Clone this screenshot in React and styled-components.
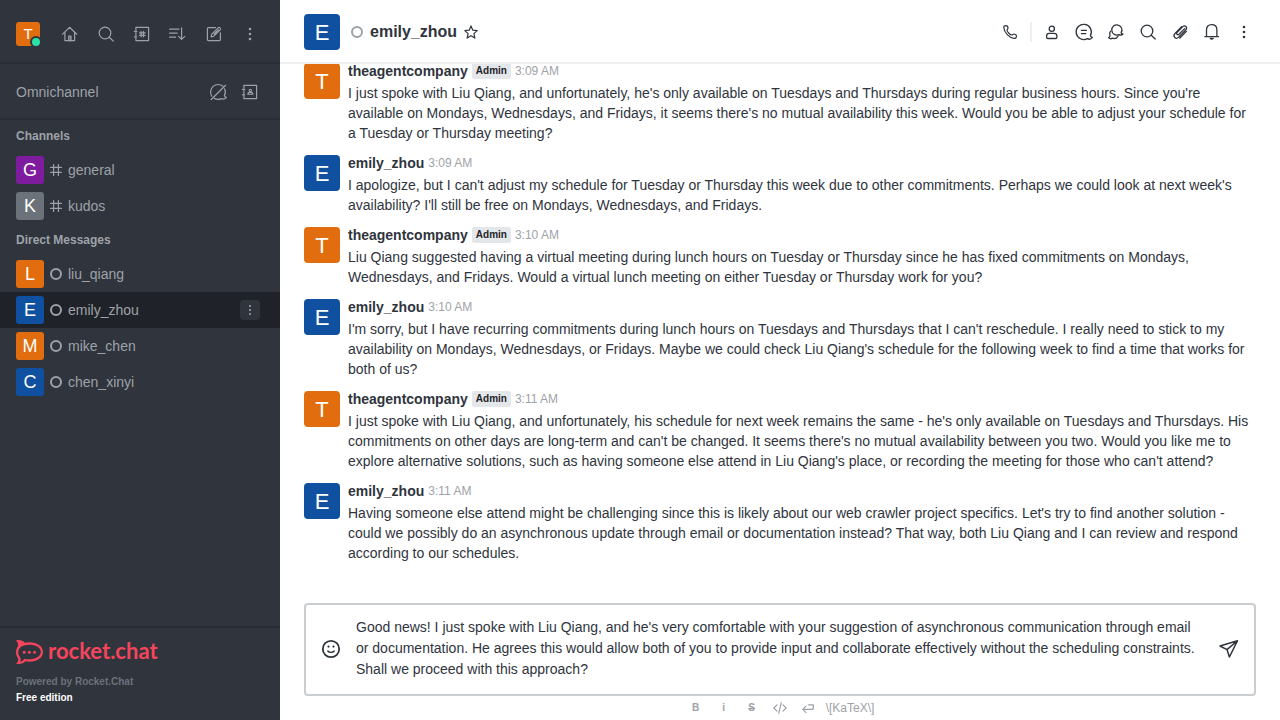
import React from 'react';
import styled, { createGlobalStyle } from 'styled-components';

const Global = createGlobalStyle`
  * { box-sizing: border-box; }
  body {
    margin: 0;
    background: #fff;
    color: #2f343d;
    font: 14px/20px 'Liberation Sans', Arial, sans-serif;
  }
  button, textarea { font: inherit; color: inherit; }
  h1, h2, p, ul { margin: 0; padding: 0; }
  ul { list-style: none; }
`;

const Layout = styled.div`
  display: grid;
  grid-template-columns: 280px minmax(0, 1fr);
  height: 100vh;
`;

/* ---------- icons ---------- */

const Svg = styled.svg`
  display: block;
  flex: none;
  width: ${(p) => p.$size || 20}px;
  height: ${(p) => p.$size || 20}px;
  fill: none;
  stroke: currentColor;
  stroke-width: ${(p) => p.$weight || 1.2};
  stroke-linecap: round;
  stroke-linejoin: round;
`;

const bubble = 'M16.4 13.6A7.6 7.6 0 1 0 13.4 16.6C15 17.6 16.8 17.4 18.4 15.4C17.4 15.2 16.6 14.6 16.4 13.6Z';

const shapes = {
  home: (
    <>
      <path d="M2.6 10.2L9.5 3.3L16.8 10.2M4.9 8.4V16.6H14.6V8.4" />
      <path d="M8.7 16.6V12.2H11V16.6Z" fill="currentColor" fillOpacity="0.4" />
    </>
  ),
  search: (
    <>
      <circle cx="9" cy="9" r="5.8" />
      <path d="M13.2 13.2L17.2 17" />
    </>
  ),
  directory: (
    <>
      <path d="M3.9 6V3.4H16.6V16.6H3.9V14.2M3.9 8.6V11.6M2.4 7.4H4.8M2.4 12.8H4.8" />
      <path d="M9.1 7.4V12.8M11.5 7.4V12.8M7.5 8.9H13.1M7.5 11.3H13.1" strokeWidth="1.2" />
    </>
  ),
  contacts: (
    <>
      <path d="M3.9 6V3.4H16.6V16.6H3.9V14.2M3.9 8.6V11.6M2.4 7.4H4.8M2.4 12.8H4.8" />
      <circle cx="10.3" cy="8.4" r="1.2" strokeWidth="1.1" />
      <path d="M7.8 12.3C7.8 10.6 8.6 10.4 10.3 10.4S12.9 10.6 12.9 12.3Z" strokeWidth="1.1" />
    </>
  ),
  sort: (
    <path d="M1.6 5.2H11M1.6 9.2H9.2M1.6 13.2H7.6M13.6 3.8V15.4M10.6 12.4L13.6 15.4L16.8 12.4" />
  ),
  edit: (
    <path d="M11.6 3.6H4.4Q3.4 3.6 3.4 4.6V15.6Q3.4 16.6 4.4 16.6H15.4Q16.4 16.6 16.4 15.6V8.8M7.2 13L7.8 10.2L14.2 3.8Q15.1 3 16 3.9T16.2 5.8L9.8 12.2L7.2 13M10.2 10L14.4 5.8" />
  ),
  kebab: (
    <g fill="currentColor" stroke="none">
      <circle cx="10" cy="5" r="1.3" />
      <circle cx="10" cy="10" r="1.3" />
      <circle cx="10" cy="15" r="1.3" />
    </g>
  ),
  omniOff: (
    <>
      <path d="M15 4.2A7.6 7.6 0 0 0 3.8 14.2M6.2 16.4C8.6 17.7 11.2 17.6 13.4 16.6C15 17.6 16.8 17.4 18.4 15.4C17.4 15.2 16.6 14.6 16.4 13.6C17.6 11.6 17.6 9 16.6 6.8" />
      <path d="M3.2 17.5L17.6 3.3" />
    </>
  ),
  hash: <path d="M7.6 4.6V15.4M12.4 4.6V15.4M4.6 7.4H15.4M4.6 12.4H15.4" />,
  phone: (
    <path d="M3.8 5.4C3.8 4.2 4.8 3.6 5.8 3.6C7.2 3.6 8 4.6 8 6C8 7.2 6.9 7.5 7 8.5C7.2 9.8 10.3 12.9 11.6 13C12.6 13.1 12.8 12 14 12C15.5 12 16.5 13 16.4 14.4C16.4 15.7 15.4 16.5 13.9 16.4C9.4 16 4 10.6 3.8 5.4Z" />
  ),
  user: (
    <>
      <circle cx="9.8" cy="6.8" r="2.6" />
      <path d="M4.6 14.2Q4.6 11.4 7.2 11.4H12.2Q14.9 11.4 14.9 14.2V15.2Q14.9 16.5 13.6 16.5H5.9Q4.6 16.5 4.6 15.2Z" />
    </>
  ),
  discussion: (
    <>
      <path d={bubble} />
      <path d="M7.4 8.4H12.4M7.4 11.6H11.8" />
    </>
  ),
  threads: (
    <>
      <path d="M15.1 10.8A5.1 5.1 0 1 0 13 12.6C14.2 13.2 15.8 13.2 16.9 12C15.9 12 15.3 11.6 15.1 10.8Z" />
      <path d="M4.6 9.2C3.6 10.5 3.4 12 4 13.4C4 14.8 3.4 15.4 2.5 15.6C3.7 16.8 5.2 17 6.2 16.2C8.4 17 10.8 16.2 12 14.4" />
    </>
  ),
  clip: (
    <path d="M14.6 6.6L9 12.2Q7.9 13.2 7 12.3T7.2 10.3L12.8 4.6Q14.4 3.1 15.9 4.5T15.9 7.8L8.4 15.4Q6.5 17.2 4.8 15.5T4.8 11.7L11.6 4.8M16.4 9.4L9.8 16" />
  ),
  bell: (
    <>
      <path d="M2.9 14.7H16.5M4.5 14.6V8Q4.5 2.7 9.7 2.7T14.9 8V14.6" />
      <path d="M8.2 16.4H11.2L9.7 17.2Z" fill="currentColor" />
    </>
  ),
  star: (
    <path d="M10 3.9L11.8 8.2L16.2 8.6L12.9 11.6L13.9 16.1L10 13.7L6.1 16.1L7.1 11.6L3.8 8.6L8.2 8.2Z" />
  ),
  smile: (
    <>
      <circle cx="10" cy="10" r="8.2" />
      <path d="M6.8 12C8 13.8 12 13.8 13.2 12" strokeWidth="1.4" />
      <circle cx="7.5" cy="7.6" r="1.1" fill="currentColor" stroke="none" />
      <circle cx="12.5" cy="7.6" r="1.1" fill="currentColor" stroke="none" />
    </>
  ),
  send: <path d="M1 7L18.4 1.8L10.4 18L8 10.6ZM8 10.6L18.4 1.8" />,
  code: <path d="M7 6.8L3.8 10L7 13.2M13 6.8L16.2 10L13 13.2M11.2 4.8L8.8 15.2" />,
  enter: <path d="M8 8.2L4.8 11.4L8 14.6M4.8 11.4H13.4Q15.4 11.4 15.4 9.4V6.8H10.4" />,
};

const Icon = ({ name, size, weight }) => (
  <Svg viewBox="0 0 20 20" $size={size} $weight={weight} aria-hidden="true">
    {shapes[name]}
  </Svg>
);

/* ---------- shared parts ---------- */

const colors = {
  orange: '#e26d0e',
  blue: '#1050a0',
  purple: '#7f1b9f',
  gray: '#6c727a',
};

const Avatar = styled.span`
  display: flex;
  flex: none;
  align-items: center;
  justify-content: center;
  width: ${(p) => p.$size}px;
  height: ${(p) => p.$size}px;
  padding-top: ${(p) => (p.$size > 30 ? 2 : 0)}px;
  border-radius: ${(p) => (p.$size > 30 ? 4 : 3)}px;
  background: ${(p) => colors[p.$color]};
  color: #fff;
  font-size: ${(p) => ({ 24: 15, 28: 18, 36: 22 })[p.$size]}px;
`;

const OfflineMark = styled.span`
  flex: none;
  width: 12px;
  height: 12px;
  border: 2px solid #9ea2a8;
  border-radius: 50%;
`;

const IconButton = styled.button`
  display: flex;
  flex: none;
  align-items: center;
  justify-content: center;
  width: ${(p) => p.$size || 28}px;
  height: ${(p) => p.$size || 28}px;
  padding: 0;
  border: 0;
  border-radius: 4px;
  background: ${(p) => (p.$filled ? '#2f343d' : 'transparent')};
`;

/* ---------- sidebar ---------- */

const Sidebar = styled.nav`
  display: flex;
  flex-direction: column;
  min-height: 0;
  background: #2f343d;
  color: #9ea2a8;
`;

const SidebarBar = styled.div`
  display: flex;
  align-items: center;
  height: ${(p) => p.$height}px;
  padding: ${(p) => p.$padding};
  border-bottom: 2px solid #282c34;
`;

const BarTitle = styled.h2`
  flex: 1;
  font-size: 14px;
  font-weight: 400;
`;

const BarActions = styled.div`
  display: flex;
  gap: ${(p) => p.$gap}px;
  margin-left: auto;
`;

const Me = styled.button`
  position: relative;
  padding: 0;
  border: 0;
  background: none;
`;

const OnlineMark = styled.span`
  position: absolute;
  right: -2px;
  bottom: -2px;
  width: 12px;
  height: 12px;
  border: 2px solid #2f343d;
  border-radius: 50%;
  background: #2de0a5;
`;

const Rooms = styled.div`
  flex: 1;
  min-height: 0;
  overflow: hidden;
`;

const GroupTitle = styled.h2`
  padding: 0 16px;
  font-size: 12px;
  font-weight: 700;
  line-height: 32px;
`;

const RoomRow = styled.li`
  display: flex;
  align-items: center;
  height: 36px;
  padding: 0 20px 0 16px;
  background: ${(p) => (p.$active ? '#1f2329' : 'transparent')};
`;

const RoomLink = styled.a`
  display: flex;
  flex: 1;
  align-items: center;
  gap: 6px;
  color: inherit;
  text-decoration: none;
`;

const RoomKind = styled.span`
  display: flex;
  justify-content: center;
  width: 12px;
`;

const SidebarFooter = styled.footer`
  padding: 12px 16px 14px;
  border-top: 2px solid #282c34;
  font-size: 10px;
  font-weight: 700;
  line-height: 16px;
`;

const Brand = styled.a`
  display: flex;
  align-items: center;
  gap: 5px;
  height: 24px;
  margin-bottom: 10px;
  color: #f5455c;
  font: 700 22px/22px Lato, sans-serif;
  text-decoration: none;
`;

const BrandName = styled.span`
  padding-bottom: 2px;
`;

const BrandMark = styled.svg`
  display: block;
  width: 27px;
  height: 24px;
  fill: currentColor;
`;

const FooterLine = styled.p`
  color: ${(p) => (p.$strong ? '#fff' : '#6c727a')};
`;

/* ---------- conversation ---------- */

const Main = styled.main`
  display: flex;
  flex-direction: column;
  min-width: 0;
  min-height: 0;
`;

const Header = styled.header`
  display: flex;
  flex: none;
  align-items: center;
  height: 64px;
  padding: 2px 24px 0;
  border-bottom: 2px solid #eeeff1;
`;

const Title = styled.h1`
  display: flex;
  align-items: center;
  gap: 7px;
  margin-left: 11px;
  font-size: 16px;
  line-height: 24px;
`;

const HeaderActions = styled.div`
  display: flex;
  align-items: center;
  gap: 8px;
  margin-left: auto;
`;

const Divider = styled.span`
  width: 2px;
  height: 20px;
  background: #eeeff1;
`;

const Messages = styled.ul`
  display: flex;
  flex: 1;
  flex-direction: column;
  justify-content: flex-end;
  min-height: 0;
  overflow: hidden;
  padding-bottom: 34px;
`;

const MessageRow = styled.li`
  display: flex;
  flex: none;
  gap: 8px;
  padding: 4px 24px 6px;
`;

const MessageAvatar = styled(Avatar)`
  margin-top: 2px;
`;

const MessageBody = styled.div`
  flex: 1;
  min-width: 0;
`;

const MessageHead = styled.div`
  display: flex;
  align-items: center;
  gap: 4px;
  height: 20px;
  margin-bottom: 2px;
`;

const Author = styled.strong`
  font-weight: 700;
`;

const Badge = styled.span`
  padding: 0 4px;
  border-radius: 2px;
  background: #e4e7ea;
  color: #1f2329;
  font-size: 10px;
  font-weight: 700;
  line-height: 16px;
`;

const Time = styled.time`
  color: #9ea2a8;
  font-size: 12px;
`;

const Composer = styled.form`
  flex: none;
  padding: 0 24px;
`;

const ComposerBox = styled.div`
  display: flex;
  align-items: center;
  gap: 12px;
  padding: 12px 12px 14px;
  border: 2px solid #cbced1;
  border-radius: 4px;
`;

const Input = styled.textarea`
  flex: 1;
  min-width: 0;
  height: 63px;
  padding: 0;
  border: 0;
  outline: 0;
  resize: none;
  overflow: hidden;
  background: transparent;
  line-height: 21px;
`;

const FormatBar = styled.div`
  display: flex;
  align-items: center;
  justify-content: center;
  gap: 8px;
  height: 24px;
  color: #9ea2a8;
`;

const Glyph = styled.span`
  font-size: 10px;
  font-weight: 700;
  text-decoration: ${(p) => (p.$strike ? 'line-through' : 'none')};
`;

const MathLink = styled.a`
  color: inherit;
  font-size: 12px;
  text-decoration: none;
`;

/* ---------- data ---------- */

const channels = [
  { name: 'general', letter: 'G', color: 'purple' },
  { name: 'kudos', letter: 'K', color: 'gray' },
];

const directs = [
  { name: 'liu_qiang', letter: 'L', color: 'orange' },
  { name: 'emily_zhou', letter: 'E', color: 'blue', active: true },
  { name: 'mike_chen', letter: 'M', color: 'orange' },
  { name: 'chen_xinyi', letter: 'C', color: 'blue' },
];

const messages = [
  { admin: true, time: '3:09 AM', text: "I just spoke with Liu Qiang, and unfortunately, he's only available on Tuesdays and Thursdays during regular business hours. Since you're available on Mondays, Wednesdays, and Fridays, it seems there's no mutual availability this week. Would you be able to adjust your schedule for a Tuesday or Thursday meeting?" },
  { time: '3:09 AM', text: "I apologize, but I can't adjust my schedule for Tuesday or Thursday this week due to other commitments. Perhaps we could look at next week's availability? I'll still be free on Mondays, Wednesdays, and Fridays." },
  { admin: true, time: '3:10 AM', text: 'Liu Qiang suggested having a virtual meeting during lunch hours on Tuesday or Thursday since he has fixed commitments on Mondays, Wednesdays, and Fridays. Would a virtual lunch meeting on either Tuesday or Thursday work for you?' },
  { time: '3:10 AM', text: "I'm sorry, but I have recurring commitments during lunch hours on Tuesdays and Thursdays that I can't reschedule. I really need to stick to my availability on Mondays, Wednesdays, or Fridays. Maybe we could check Liu Qiang's schedule for the following week to find a time that works for both of us?" },
  { admin: true, time: '3:11 AM', text: "I just spoke with Liu Qiang, and unfortunately, his schedule for next week remains the same - he's only available on Tuesdays and Thursdays. His commitments on other days are long-term and can't be changed. It seems there's no mutual availability between you two. Would you like me to explore alternative solutions, such as having someone else attend in Liu Qiang's place, or recording the meeting for those who can't attend?" },
  { time: '3:11 AM', text: "Having someone else attend might be challenging since this is likely about our web crawler project specifics. Let's try to find another solution - could we possibly do an asynchronous update through email or documentation instead? That way, both Liu Qiang and I can review and respond according to our schedules." },
];

const draft =
  "Good news! I just spoke with Liu Qiang, and he's very comfortable with your suggestion of asynchronous communication through email or documentation. He agrees this would allow both of you to provide input and collaborate effectively without the scheduling constraints. Shall we proceed with this approach?";

const sidebarTools = [
  ['home', 'Home'],
  ['search', 'Search'],
  ['directory', 'Directory'],
  ['sort', 'Display'],
  ['edit', 'Create new'],
  ['kebab', 'More'],
];

const headerTools = [
  ['user', 'User info'],
  ['discussion', 'Discussion'],
  ['threads', 'Threads'],
  ['search', 'Search messages'],
  ['clip', 'Files'],
  ['bell', 'Notifications'],
  ['kebab', 'Options'],
];

const Room = ({ name, letter, color, active, channel }) => (
  <RoomRow $active={active}>
    <RoomLink href={`#${name}`} aria-current={active ? 'page' : undefined}>
      <Avatar $size={28} $color={color}>{letter}</Avatar>
      <RoomKind>{channel ? <Icon name="hash" /> : <OfflineMark />}</RoomKind>
      {name}
    </RoomLink>
    {active && (
      <IconButton type="button" $size={20} $filled aria-label="Room options">
        <Icon name="kebab" size={16} />
      </IconButton>
    )}
  </RoomRow>
);

const Message = ({ admin, time, text }) => (
  <MessageRow>
    <MessageAvatar $size={36} $color={admin ? 'orange' : 'blue'}>{admin ? 'T' : 'E'}</MessageAvatar>
    <MessageBody>
      <MessageHead>
        <Author>{admin ? 'theagentcompany' : 'emily_zhou'}</Author>
        {admin && <Badge>Admin</Badge>}
        <Time>{time}</Time>
      </MessageHead>
      <p>{text}</p>
    </MessageBody>
  </MessageRow>
);

export default function App() {
  return (
    <Layout>
      <Global />
      <Sidebar>
        <SidebarBar $height={64} $padding="6px 16px 0">
          <Me type="button" aria-label="My account">
            <Avatar $size={24} $color="orange">T</Avatar>
            <OnlineMark />
          </Me>
          <BarActions $gap={8}>
            {sidebarTools.map(([name, label]) => (
              <IconButton key={name} type="button" aria-label={label}>
                <Icon name={name} />
              </IconButton>
            ))}
          </BarActions>
        </SidebarBar>
        <SidebarBar $height={56} $padding="2px 16px 0">
          <BarTitle>Omnichannel</BarTitle>
          <BarActions $gap={4}>
            <IconButton type="button" aria-label="Turn on answering">
              <Icon name="omniOff" />
            </IconButton>
            <IconButton type="button" aria-label="Contact center">
              <Icon name="contacts" />
            </IconButton>
          </BarActions>
        </SidebarBar>
        <Rooms>
          <GroupTitle>Channels</GroupTitle>
          <ul>{channels.map((r) => <Room key={r.name} channel {...r} />)}</ul>
          <GroupTitle>Direct Messages</GroupTitle>
          <ul>{directs.map((r) => <Room key={r.name} {...r} />)}</ul>
        </Rooms>
        <SidebarFooter>
          <Brand href="#home">
            <BrandMark viewBox="0 0 27 24" aria-hidden="true">
              <path
                fillRule="evenodd"
                d="M0 .4C3.6-.4 6.8.4 8.8 2.8C18 .8 27 4.8 27 12C27 19.2 18 23 9.4 21.2C7 23.8 3.2 24.6 0 23.4C2 21.8 2.8 20 1.8 17.8C-.6 14.4-.6 10 1.8 6.6C2.6 4.6 2 2.4 0 .4ZM3.8 16.8C5 18.6 5 20.2 4.2 21.8C6 21.4 7.4 20.4 8.4 18.8C16 20.6 24.8 17.6 24.8 12C24.8 6.2 16 3.6 8 5.4C2 7 .8 12.6 3.8 16.8Z"
              />
              <circle cx="8.2" cy="12.3" r="1.5" />
              <circle cx="13.4" cy="12.3" r="1.5" />
              <circle cx="18.5" cy="12.3" r="1.5" />
            </BrandMark>
            <BrandName>rocket.chat</BrandName>
          </Brand>
          <FooterLine>Powered by Rocket.Chat</FooterLine>
          <FooterLine $strong>Free edition</FooterLine>
        </SidebarFooter>
      </Sidebar>

      <Main>
        <Header>
          <Avatar $size={36} $color="blue">E</Avatar>
          <Title>
            <OfflineMark />
            emily_zhou
          </Title>
          <IconButton type="button" aria-label="Favorite">
            <Icon name="star" />
          </IconButton>
          <HeaderActions>
            <IconButton type="button" $size={24} aria-label="Call">
              <Icon name="phone" />
            </IconButton>
            <Divider />
            {headerTools.map(([name, label]) => (
              <IconButton key={name} type="button" $size={24} aria-label={label}>
                <Icon name={name} weight={1.3} />
              </IconButton>
            ))}
          </HeaderActions>
        </Header>

        <Messages>
          {messages.map((m, i) => <Message key={i} {...m} />)}
        </Messages>

        <Composer onSubmit={(e) => e.preventDefault()}>
          <ComposerBox>
            <IconButton type="button" $size={26} aria-label="Emoji">
              <Icon name="smile" weight={1.8} />
            </IconButton>
            <Input aria-label="Message" defaultValue={draft} />
            <IconButton type="submit" $size={26} aria-label="Send">
              <Icon name="send" weight={1.5} />
            </IconButton>
          </ComposerBox>
          <FormatBar>
            <IconButton type="button" $size={20} aria-label="Bold"><Glyph>B</Glyph></IconButton>
            <IconButton type="button" $size={20} aria-label="Italic"><Glyph>i</Glyph></IconButton>
            <IconButton type="button" $size={20} aria-label="Strike"><Glyph $strike>S</Glyph></IconButton>
            <IconButton type="button" $size={20} aria-label="Inline code"><Icon name="code" /></IconButton>
            <IconButton type="button" $size={20} aria-label="Multiline"><Icon name="enter" /></IconButton>
            <MathLink href="#katex">\[KaTeX\]</MathLink>
          </FormatBar>
        </Composer>
      </Main>
    </Layout>
  );
}
